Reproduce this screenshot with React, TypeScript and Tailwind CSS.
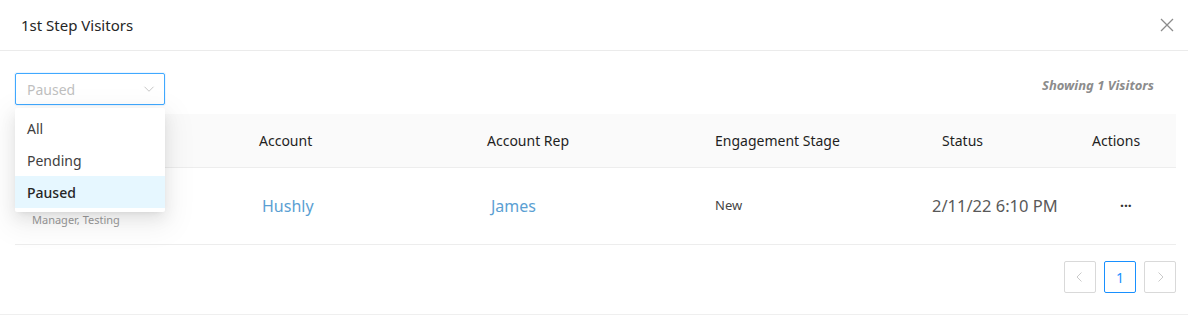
import type { FC } from 'react'

const font = { fontFamily: '"Noto Sans", "Open Sans", Arial, sans-serif' }

const Chevron: FC<{ dir: 'down' | 'left' | 'right'; className?: string }> = ({ dir, className }) => {
  const d = dir === 'down' ? 'M2 5l6 6 6-6' : dir === 'left' ? 'M10 2L4 8l6 6' : 'M6 2l6 6-6 6'
  return (
    <svg className={className} viewBox="0 0 16 16" fill="none" stroke="currentColor" strokeWidth={1.2}>
      <path d={d} />
    </svg>
  )
}

const FilterSelect: FC = () => (
  <div className="relative w-[150px]">
    <div className="flex h-[32px] items-center justify-between rounded-[2px] border border-[#40a9ff] bg-white pl-[11px] pr-[9px] shadow-[0_0_0_1px_rgba(24,144,255,0.08)]">
      <span className="text-[14px] text-[#bfbfbf]">Paused</span>
      <Chevron dir="down" className="h-[12px] w-[12px] text-[#bfbfbf]" />
    </div>
    <div className="absolute left-0 top-[35px] z-10 w-[150px] rounded-[2px] bg-white py-[4px] shadow-[0_3px_6px_-4px_rgba(0,0,0,0.12),0_6px_16px_0_rgba(0,0,0,0.08),0_9px_28px_8px_rgba(0,0,0,0.05)]">
      {['All', 'Pending', 'Paused'].map(item => (
        <div
          key={item}
          className={
            item === 'Paused'
              ? 'flex h-[32px] items-center bg-[#e6f7ff] px-[12px] text-[14px] font-medium text-[#262626]'
              : 'flex h-[32px] items-center px-[12px] text-[14px] text-[#404040]'
          }
        >
          {item}
        </div>
      ))}
    </div>
  </div>
)

const cols = 'grid grid-cols-[228px_228px_228px_227px_150px_100px]'

export default function App() {
  return (
    <div className="h-[316px] w-[1188px] overflow-hidden bg-white" style={font}>
      <div className="flex h-[51px] items-center justify-between border-b border-[#ebebeb] pl-[21px] pr-[14px]">
        <h2 className="text-[15px] text-[#262626]">1st Step Visitors</h2>
        <svg className="h-[14px] w-[14px] text-[#8c8c8c]" viewBox="0 0 14 14" stroke="currentColor" strokeWidth={1.3}>
          <path d="M1 1l12 12M13 1L1 13" />
        </svg>
      </div>

      <div className="px-[15px] pt-[22px]">
        <div className="flex items-start justify-between">
          <FilterSelect />
          <span className="mr-[19px] mt-[3px] text-[13px] font-bold italic text-[#8c8c8c]">Showing 1 Visitors</span>
        </div>

        <div className="mt-[9px] w-[1161px]">
          <div className={`${cols} h-[54px] items-center border-b border-[#ededed] bg-[#fafafa] text-[14px] text-[#1f1f1f]`}>
            <div className="px-[16px]" />
            <div className="px-[16px]">Account</div>
            <div className="px-[16px]">Account Rep</div>
            <div className="px-[16px]">Engagement Stage</div>
            <div className="px-[16px]">Status</div>
            <div className="px-[16px]">Actions</div>
          </div>
          <div className={`${cols} h-[77px] items-center border-b border-[#ededed]`}>
            <div className="flex flex-col px-[17px] pt-[8px]">
              <span className="text-[14px] text-[#333]">&nbsp;</span>
              <span className="text-[11px] text-[#9a9a9a]">Manager, Testing</span>
            </div>
            <div className="px-[19px] text-[16px] text-[#5b9fd3]">Hushly</div>
            <div className="px-[20px] text-[16px] text-[#5b9fd3]">James</div>
            <div className="px-[16px] text-[13px] text-[#454545]">New</div>
            <div className="pl-[6px] text-[16.5px] text-[#595959]">2/11/22 6:10 PM</div>
            <div className="pl-[44px] text-[14px] font-bold leading-none text-[#333]">···</div>
          </div>
        </div>

        <div className="mt-[16px] flex w-[1161px] justify-end gap-[8px]">
          <button className="flex h-[32px] w-[32px] items-center justify-center rounded-[2px] border border-[#d9d9d9] text-[#c4c4c4]">
            <Chevron dir="left" className="h-[12px] w-[12px]" />
          </button>
          <button className="flex h-[32px] w-[32px] items-center justify-center rounded-[2px] border border-[#1890ff] text-[14px] text-[#1890ff]">
            1
          </button>
          <button className="flex h-[32px] w-[32px] items-center justify-center rounded-[2px] border border-[#d9d9d9] text-[#c4c4c4]">
            <Chevron dir="right" className="h-[12px] w-[12px]" />
          </button>
        </div>
      </div>
      <div className="mt-[21px] border-t border-[#efefef]" />
    </div>
  )
}
